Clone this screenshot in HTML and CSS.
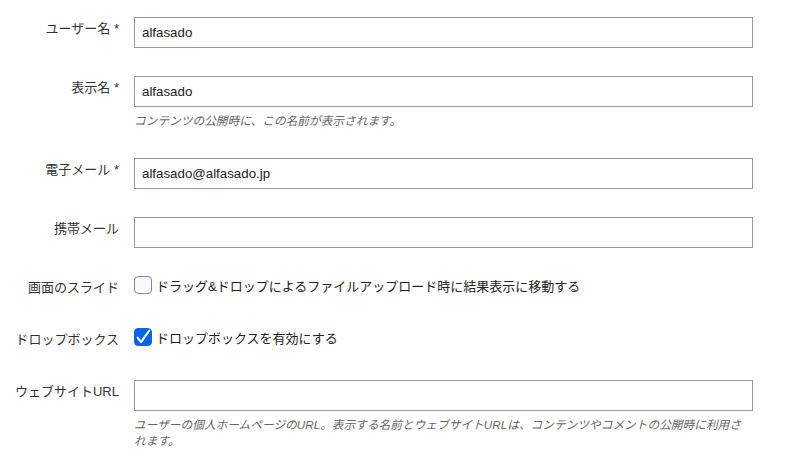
FILE: index.html
```html
<!DOCTYPE html>
<html lang="ja">
<head>
  <meta charset="UTF-8">
  <title>ユーザー情報の編集</title>
  <link rel="stylesheet" href="styles.css">
</head>
<body>
<form class="profile">
  <div class="row">
    <label class="row-label" for="name">ユーザー名 *</label>
    <div class="row-field">
      <input class="text" id="name" type="text" value="alfasado">
    </div>
  </div>
  <div class="row">
    <label class="row-label" for="nickname">表示名 *</label>
    <div class="row-field">
      <input class="text" id="nickname" type="text" value="alfasado">
      <p class="hint">コンテンツの公開時に、この名前が表示されます。</p>
    </div>
  </div>
  <div class="row">
    <label class="row-label" for="email">電子メール *</label>
    <div class="row-field">
      <input class="text" id="email" type="text" value="alfasado@alfasado.jp">
    </div>
  </div>
  <div class="row">
    <label class="row-label" for="mobile">携帯メール</label>
    <div class="row-field">
      <input class="text" id="mobile" type="text" value="">
    </div>
  </div>
  <div class="row row-check">
    <span class="row-label">画面のスライド</span>
    <label class="row-field check">
      <span class="box"></span>
      <span>ドラッグ&amp;ドロップによるファイルアップロード時に結果表示に移動する</span>
    </label>
  </div>
  <div class="row row-check">
    <span class="row-label">ドロップボックス</span>
    <label class="row-field check">
      <span class="box checked">
        <svg width="18" height="18" viewBox="0 0 18 18"><path d="M3.6 9.6 L7 14.2 L15.2 2.6" fill="none" stroke="#fff" stroke-width="2" stroke-linecap="round" stroke-linejoin="round"/></svg>
      </span>
      <span>ドロップボックスを有効にする</span>
    </label>
  </div>
  <div class="row">
    <label class="row-label" for="url">ウェブサイトURL</label>
    <div class="row-field">
      <input class="text" id="url" type="text" value="">
      <p class="hint">ユーザーの個人ホームページのURL。表示する名前とウェブサイトURLは、コンテンツやコメントの公開時に利用されます。</p>
    </div>
  </div>
</form>
</body>
</html>
```

FILE: styles.css
```css
* {
  margin: 0;
  padding: 0;
  box-sizing: border-box;
}
html, body {
  background: #fff;
}
body {
  font-family: "Liberation Sans", "Noto Sans CJK JP", sans-serif;
  font-size: 13px;
  color: #333;
}
.profile {
  display: flex;
  flex-direction: column;
  gap: 28px;
  padding-top: 17px;
}
.row {
  display: grid;
  grid-template-columns: 119px 619px;
  column-gap: 15px;
  align-items: start;
}
.row-label {
  text-align: right;
  white-space: nowrap;
  padding-top: 3px;
  line-height: 17px;
  color: #333;
}
.row-field .text {
  display: block;
  width: 100%;
  height: 31px;
  border: 1px solid #999;
  border-radius: 0;
  padding: 0 7px;
  font-family: "Liberation Sans", "Noto Sans CJK JP", sans-serif;
  font-size: 13.3px;
  color: #222;
  background: #fff;
  outline: none;
}
.hint {
  margin-top: 6px;
  padding-right: 4px;
  line-height: 16.5px;
  font-size: 11.7px;
  font-style: italic;
  color: #666;
}
.row-check {
  height: 24px;
}
.check {
  display: flex;
  align-items: flex-start;
  gap: 4px;
  line-height: 17px;
  color: #222;
}
.check .box {
  flex: none;
  width: 18px;
  height: 18px;
  border: 1px solid #8a8a8a;
  border-radius: 4px;
  background: #fbfbfb;
}
.check .box.checked {
  border-color: #0b63e6;
  background: #0b63e6;
}
.check .box svg {
  display: block;
  margin: -1px;
}
.check span + span {
  padding-top: 2px;
}
```
